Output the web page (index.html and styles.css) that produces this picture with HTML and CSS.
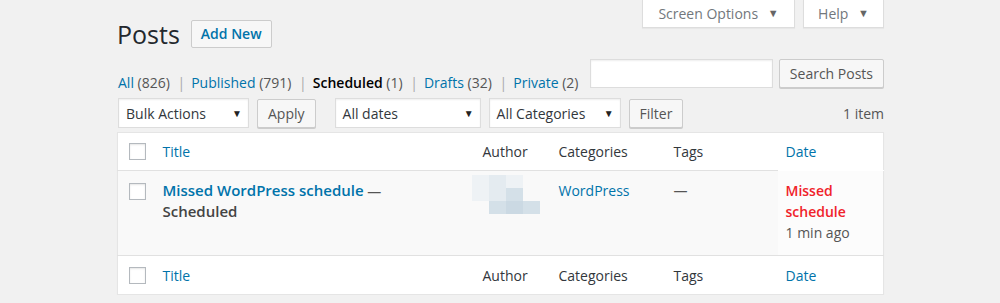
FILE: index.html
```html
<!DOCTYPE html>
<html lang="en">
<head>
    <meta charset="UTF-8">
    <title>Posts</title>
    <link rel="stylesheet" href="styles.css">
</head>
<body>
    <!-- Screen Options / Help tabs -->
    <div class="screen-meta">
        <button class="meta-tab meta-wide">Screen Options <span class="caret">▼</span></button>
        <button class="meta-tab">Help <span class="caret">▼</span></button>
    </div>

    <div class="wrap">
        <div class="page-head">
            <h1 class="page-title">Posts</h1>
            <a class="add-new">Add New</a>
        </div>

        <div class="filter-row">
            <ul class="subsubsub">
                <li><a>All <span class="count">(826)</span></a> <span class="sep">|</span></li>
                <li><a>Published <span class="count">(791)</span></a> <span class="sep">|</span></li>
                <li><a class="current">Scheduled <span class="count">(1)</span></a> <span class="sep">|</span></li>
                <li><a>Drafts <span class="count">(32)</span></a> <span class="sep">|</span></li>
                <li><a>Private <span class="count">(2)</span></a></li>
            </ul>
            <div class="search-box">
                <input type="search" class="search-input">
                <button class="btn">Search Posts</button>
            </div>
        </div>

        <div class="tablenav">
            <div class="select w-bulk"><span>Bulk Actions</span><span class="caret">▼</span></div>
            <button class="btn btn-apply">Apply</button>
            <div class="select w-dates"><span>All dates</span><span class="caret">▼</span></div>
            <div class="select w-cats"><span>All Categories</span><span class="caret">▼</span></div>
            <button class="btn">Filter</button>
            <span class="items">1 item</span>
        </div>

        <table class="posts">
            <colgroup>
                <col class="c-cb"><col class="c-title"><col class="c-author"><col class="c-cats"><col class="c-tags"><col class="c-date">
            </colgroup>
            <thead>
                <tr>
                    <th class="cb"><span class="check"></span></th>
                    <th><a>Title</a></th>
                    <th>Author</th>
                    <th>Categories</th>
                    <th>Tags</th>
                    <th class="no-line"><a>Date</a></th>
                </tr>
            </thead>
            <tbody>
                <tr>
                    <td class="cb"><span class="check"></span></td>
                    <td class="title-cell"><strong><a>Missed WordPress schedule</a> —<br><span class="state">Scheduled</span></strong></td>
                    <td><div class="blur">
                        <i class="b1"></i><i class="b2"></i><i class="b1"></i><i class="b0"></i>
                        <i class="b1"></i><i class="b2"></i><i class="b3"></i><i class="b0"></i>
                        <i class="b0"></i><i class="b3"></i><i class="b4"></i><i class="b3"></i>
                    </div></td>
                    <td><a>WordPress</a></td>
                    <td class="dash">—</td>
                    <td class="date-cell"><span class="missed">Missed<br>schedule</span><br>1 min ago</td>
                </tr>
            </tbody>
            <tfoot>
                <tr>
                    <th class="cb"><span class="check"></span></th>
                    <th><a>Title</a></th>
                    <th>Author</th>
                    <th>Categories</th>
                    <th>Tags</th>
                    <th><a>Date</a></th>
                </tr>
            </tfoot>
        </table>
    </div>
</body>
</html>
```

FILE: styles.css
```css
* {
    margin: 0;
    padding: 0;
    box-sizing: border-box;
}

body {
    background-color: #f1f1f1;
    font-family: "Open Sans", Arial, sans-serif;
    font-size: 14px;
    color: #444;
}

a {
    color: #0073aa;
    text-decoration: none;
}

.caret {
    font-size: 10px;
    margin-left: 4px;
    vertical-align: 2px;
}

.screen-meta {
    display: flex;
    justify-content: flex-end;
    gap: 8px;
    margin-right: 116px;
}

.meta-tab {
    height: 28px;
    width: 81px;
    background: #fff;
    border: 1px solid #ddd;
    border-top: none;
    box-shadow: 0 1px 1px rgba(0, 0, 0, 0.04);
    color: #72777c;
    font-family: inherit;
    font-size: 14px;
}

.meta-tab .caret {
    font-size: 11px;
    margin-left: 6px;
    color: #666;
}

.meta-wide {
    width: 153px;
}

.wrap {
    margin: -14px 116px 0 117px;
}

.page-head {
    display: flex;
    align-items: center;
    gap: 11px;
    height: 40px;
}

.page-title {
    font-size: 25px;
    font-weight: 400;
    color: #23282d;
}

.add-new {
    display: inline-block;
    height: 28px;
    line-height: 26px;
    padding: 0 9px;
    border: 1px solid #ccc;
    border-radius: 2px;
    background: #f7f7f7;
    font-weight: 600;
    font-size: 14px;
}

.filter-row {
    display: flex;
    justify-content: space-between;
    align-items: flex-end;
    margin-top: 5px;
}

.subsubsub {
    list-style: none;
    display: flex;
    gap: 2px;
    margin-bottom: -4px;
    margin-left: 1px;
}

.subsubsub .count {
    color: #555;
}

.subsubsub .current {
    color: #000;
    font-weight: 600;
}

.subsubsub .current .count {
    font-weight: 400;
}

.sep {
    color: #aaa;
    margin: 0 4px;
}

.search-box {
    display: flex;
    gap: 6px;
}

.search-input {
    width: 183px;
    height: 29px;
    border: 1px solid #ddd;
    background: #fff;
    box-shadow: inset 0 1px 2px rgba(0, 0, 0, 0.07);
}

.btn {
    height: 29px;
    padding: 0 10px;
    border: 1px solid #ccc;
    border-radius: 2px;
    background: #f7f7f7;
    box-shadow: 0 1px 0 #ccc;
    color: #555;
    font-family: inherit;
    font-size: 14px;
}

.tablenav {
    display: flex;
    align-items: center;
    height: 34px;
    margin-top: 8px;
    margin-left: 1px;
}

.select {
    display: flex;
    justify-content: space-between;
    align-items: center;
    height: 30px;
    padding: 0 6px 0 7px;
    background: #fff;
    border: 1px solid #ddd;
    box-shadow: inset 0 1px 2px rgba(0, 0, 0, 0.07);
    color: #32373c;
    font-size: 14px;
    margin-right: 8px;
}

.select .caret {
    color: #222;
}

.w-bulk { width: 131px; }
.w-dates { width: 146px; }
.w-cats { width: 132px; }

.btn-apply {
    margin-right: 19px;
}

.items {
    margin-left: auto;
    color: #555;
}

.posts {
    width: 100%;
    table-layout: fixed;
    border-collapse: collapse;
    background: #fff;
    border: 1px solid #e5e5e5;
    box-shadow: 0 1px 1px rgba(0, 0, 0, 0.04);
    margin-top: 2px;
}

.c-cb { width: 37px; }
.c-title { width: 320px; }
.c-author { width: 76px; }
.c-cats { width: 115px; }
.c-tags { width: 112px; }
.c-date { width: 106px; }

.posts th {
    height: 38px;
    padding: 0 8px;
    text-align: left;
    font-weight: 400;
    color: #32373c;
}

.posts tfoot th {
    height: 39px;
    border-top: 1px solid #e1e1e1;
}

.posts thead th {
    border-bottom: 1px solid #e1e1e1;
}

.posts thead th.no-line {
    border-bottom-color: #fff;
}

.posts th.cb,
.posts td.cb {
    padding: 0 0 0 11px;
}

.check {
    display: block;
    width: 17px;
    height: 17px;
    border: 1px solid #b4b9be;
    background: #fff;
    box-shadow: inset 0 1px 2px rgba(0, 0, 0, 0.1);
}

.posts tbody tr {
    background: #f9f9f9;
}

.posts td {
    height: 85px;
    padding: 9px 8px;
    vertical-align: top;
    line-height: 21px;
}

.posts td.cb {
    padding-top: 12px;
}

.title-cell strong {
    font-weight: 600;
    color: #555;
}

.title-cell a {
    font-size: 15px;
}

.title-cell .state {
    color: #444;
    font-size: 15px;
}

.blur {
    display: grid;
    grid-template-columns: repeat(4, 17px);
    grid-auto-rows: 13px;
    margin: -5px 0 0 -11px;
}

.blur i { display: block; }
.b0 { background: #f9f9f9; }
.b1 { background: #eef2f5; }
.b2 { background: #e4ebf0; }
.b3 { background: #d4e0e8; }
.b4 { background: #cbd9e3; }

.dash {
    color: #555;
}

.date-cell {
    background: #fcfcfc;
    color: #555;
}

.missed {
    color: #f0222a;
    font-weight: 600;
}
```
